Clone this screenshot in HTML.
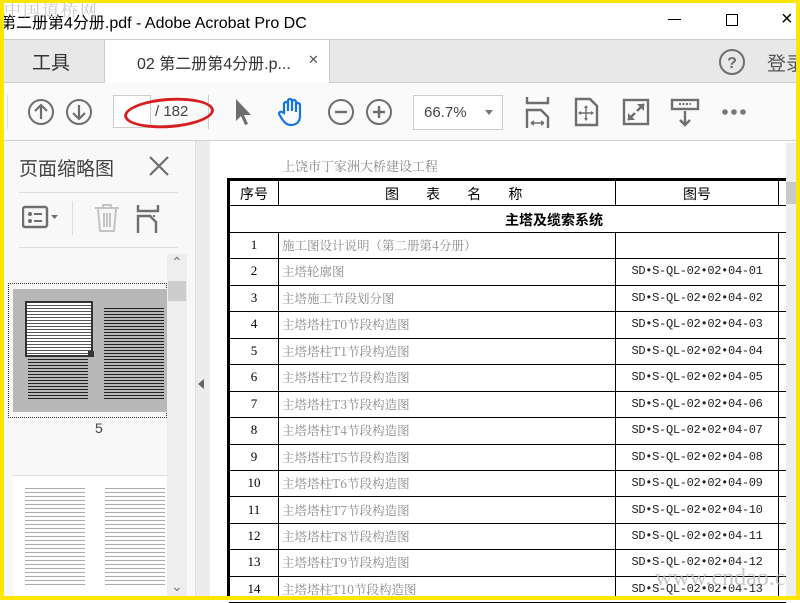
<!DOCTYPE html>
<html><head><meta charset="utf-8"><style>
*{margin:0;padding:0;box-sizing:border-box}
body{width:800px;height:600px;position:relative;overflow:hidden;background:#fff;font-family:"Liberation Sans","Noto Sans CJK SC",sans-serif}
.a{position:absolute}
.ic{position:absolute}
.tx{position:absolute;white-space:nowrap}
.h{position:absolute;height:1px;background:#000}
.v{position:absolute;width:1px;background:#000}
.num{position:absolute;width:50px;text-align:center;font-size:13px;color:#000;font-family:"Liberation Serif",serif}
.nm{position:absolute;left:282px;font-size:12.5px;color:#8a8a8a;font-family:"Noto Serif CJK SC",serif}
.cd{position:absolute;left:616px;width:162px;text-align:center;font-size:12px;color:#222;font-family:"Liberation Mono",monospace;letter-spacing:-0.3px}
</style></head><body>
<!-- title bar -->
<div class="tx" style="left:0;top:9px;font-size:16px;color:#000">第二册第4分册.pdf - Adobe Acrobat Pro DC</div>
<div class="tx" style="left:4px;top:-4px;font-size:17px;color:#c8c8c8;font-family:'Noto Serif CJK SC',serif;letter-spacing:2px">中国道桥网</div>
<div class="a" style="left:668px;top:19px;width:13px;height:1px;background:#000"></div>
<div class="a" style="left:726px;top:14px;width:12px;height:12px;border:1px solid #000"></div>
<div class="tx" style="left:781px;top:8px;font-size:20px;color:#000">×</div>
<!-- tab bar -->
<div class="a" style="left:0;top:39px;width:800px;height:44px;background:#e8e8e8;border-top:1px solid #ccc;border-bottom:1px solid #ccc"></div>
<div class="tx" style="left:32px;top:48px;font-size:19px;color:#333">工具</div>
<div class="a" style="left:104px;top:40px;width:226px;height:44px;background:#fff;border-left:1px solid #ccc;border-right:1px solid #ccc"></div>
<div class="tx" style="left:137px;top:50px;font-size:16px;color:#333">02 第二册第4分册.p...</div>
<div class="tx" style="left:308px;top:52px;font-size:13px;color:#555">✕</div>
<svg class="ic" style="left:718px;top:48px" width="28" height="28"><circle cx="14" cy="14" r="12" fill="none" stroke="#6e6e6e" stroke-width="2"/><text x="14" y="20" text-anchor="middle" font-size="16" font-weight="bold" fill="#6e6e6e" font-family="Liberation Sans">?</text></svg>
<div class="tx" style="left:767px;top:49px;font-size:19px;color:#555">登录</div>
<!-- toolbar -->
<div class="a" style="left:0;top:83px;width:800px;height:58px;background:#fafafa;border-bottom:1px solid #d0d0d0"></div>
<div class="a" style="left:7px;top:95px;width:1px;height:34px;background:#ddd"></div>
<svg class="ic" style="left:27px;top:98px" width="28" height="28"><circle cx="14" cy="14" r="12" fill="none" stroke="#6e6e6e" stroke-width="2"/><path d="M14 21V8M8 13l6-6 6 6" fill="none" stroke="#6e6e6e" stroke-width="2.2"/></svg>
<svg class="ic" style="left:65px;top:98px" width="28" height="28"><circle cx="14" cy="14" r="12" fill="none" stroke="#6e6e6e" stroke-width="2"/><path d="M14 7v13M8 15l6 6 6-6" fill="none" stroke="#6e6e6e" stroke-width="2.2"/></svg>
<div class="a" style="left:113px;top:95px;width:38px;height:33px;background:#fff;border:1px solid #ccc"></div>
<div class="tx" style="left:155px;top:103px;font-size:15px;color:#444">/ 182</div>
<div class="a" style="left:208px;top:95px;width:1px;height:34px;background:#ccc"></div>
<div class="a" style="left:124px;top:98px;width:90px;height:30px;border:3px solid #d62020;border-radius:50%;transform:rotate(-4deg)"></div>
<svg class="ic" style="left:232px;top:97px" width="22" height="30"><path d="M4 2v22l5-5 4 9 3-1-4-9h7z" fill="#6e6e6e"/></svg>
<svg class="ic" style="left:277px;top:96px" width="30" height="32"><path d="M7 17V8a2 2 0 014 0v7V5a2 2 0 014 0v10V6a2 2 0 014 0v10V9a2 2 0 014 0v11c0 6-4 9-9 9-4 0-6-2-9-6l-3-5a2 2 0 013-2z" fill="none" stroke="#1473e6" stroke-width="2.2"/></svg>
<svg class="ic" style="left:327px;top:98px" width="28" height="28"><circle cx="14" cy="14" r="12" fill="none" stroke="#6e6e6e" stroke-width="2"/><path d="M8 14h12" stroke="#6e6e6e" stroke-width="2.4"/></svg>
<svg class="ic" style="left:365px;top:98px" width="28" height="28"><circle cx="14" cy="14" r="12" fill="none" stroke="#6e6e6e" stroke-width="2"/><path d="M8 14h12M14 8v12" stroke="#6e6e6e" stroke-width="2.4"/></svg>
<div class="a" style="left:413px;top:95px;width:90px;height:35px;background:#fff;border:1px solid #ccc"></div>
<div class="tx" style="left:424px;top:104px;font-size:15px;color:#444">66.7%</div>
<div class="a" style="left:485px;top:110px;border-left:4px solid transparent;border-right:4px solid transparent;border-top:5px solid #777"></div>
<svg class="ic" style="left:524px;top:96px" width="28" height="32"><path d="M3 1v6h21V1M3 32V14h14l7 7v11" fill="none" stroke="#6e6e6e" stroke-width="2.4"/><path d="M7 27h13M7 27l3-2M7 27l3 2M20 27l-3-2M20 27l-3 2" stroke="#6e6e6e" stroke-width="1.4"/></svg>
<svg class="ic" style="left:574px;top:97px" width="26" height="30"><path d="M2 2h14l7 7v19H2z" fill="none" stroke="#6e6e6e" stroke-width="2.4"/><path d="M12 9v14M5 16h14" stroke="#6e6e6e" stroke-width="1.4"/><path d="M12 8l-2 3h4zM12 24l-2-3h4zM4 16l3-2v4zM20 16l-3-2v4z" fill="#6e6e6e"/></svg>
<svg class="ic" style="left:622px;top:98px" width="28" height="28"><rect x="2" y="2" width="24" height="24" fill="none" stroke="#6e6e6e" stroke-width="2.4"/><path d="M6 22l7-7M15 13l7-7" stroke="#6e6e6e" stroke-width="2.4"/><path d="M6 15v7h7zM15 6h7v7z" fill="#6e6e6e"/></svg>
<svg class="ic" style="left:670px;top:98px" width="30" height="30"><rect x="2" y="2" width="26" height="9" fill="none" stroke="#6e6e6e" stroke-width="2.4"/><path d="M9 6h12" stroke="#6e6e6e" stroke-width="2" stroke-dasharray="2 1.5"/><path d="M15 13v14M10 22l5 5 5-5" fill="none" stroke="#6e6e6e" stroke-width="2.4"/></svg>
<svg class="ic" style="left:720px;top:106px" width="28" height="12"><circle cx="5" cy="6" r="2.8" fill="#777"/><circle cx="14" cy="6" r="2.8" fill="#777"/><circle cx="23" cy="6" r="2.8" fill="#777"/></svg>
<!-- left panel -->
<div class="a" style="left:0;top:141px;width:195px;height:459px;background:#f8f8f8"></div>
<div class="tx" style="left:19px;top:154px;font-size:19px;color:#444">页面缩略图</div>
<svg class="ic" style="left:148px;top:155px" width="22" height="22"><path d="M2 2l18 18M20 2L2 20" stroke="#6e6e6e" stroke-width="2.2"/></svg>
<div class="a" style="left:19px;top:192px;width:159px;height:1px;background:#ddd"></div>
<svg class="ic" style="left:22px;top:205px" width="38" height="26"><rect x="1" y="2" width="24" height="20" rx="2" fill="none" stroke="#6e6e6e" stroke-width="2.4"/><circle cx="8" cy="9" r="2" fill="#6e6e6e"/><circle cx="8" cy="16" r="2" fill="#6e6e6e"/><path d="M12 9h8M12 16h8" stroke="#6e6e6e" stroke-width="2"/><path d="M29 10h7l-3.5 4z" fill="#6e6e6e"/></svg>
<div class="a" style="left:72px;top:201px;width:1px;height:34px;background:#ddd"></div>
<svg class="ic" style="left:93px;top:203px" width="28" height="30"><path d="M2 5h24M10 5V2h8v3M5 6l2 22h14l2-22M11 10v14M14 10v14M17 10v14" fill="none" stroke="#c4c4c4" stroke-width="2"/></svg>
<svg class="ic" style="left:136px;top:203px" width="26" height="30"><path d="M2 2v6h20V2M2 30V13h12l6 6v11" fill="none" stroke="#6e6e6e" stroke-width="2.4"/><path d="M3 13h16" stroke="#6e6e6e" stroke-width="2" stroke-dasharray="2 1.5"/></svg>
<div class="a" style="left:19px;top:247px;width:159px;height:1px;background:#ddd"></div>
<div class="a" style="left:167px;top:254px;width:20px;height:346px;background:#eee"></div>
<div class="tx" style="left:171px;top:254px;font-size:14px;color:#777">⌃</div>
<div class="a" style="left:168px;top:281px;width:18px;height:20px;background:#cdcdcd"></div>
<div class="tx" style="left:171px;top:578px;font-size:14px;color:#777">⌄</div>
<div class="a" style="left:8px;top:283px;width:159px;height:135px;border:1px dotted #333"></div>
<div class="a" style="left:13px;top:289px;width:154px;height:123px;background:#b8b8b8"></div>
<div class="a" style="left:28px;top:306px;width:60px;height:95px;background:repeating-linear-gradient(#b8b8b8 0 2px,#222 2px 3px)"></div>
<div class="a" style="left:104px;top:306px;width:60px;height:95px;background:repeating-linear-gradient(#b8b8b8 0 2px,#222 2px 3px)"></div>
<div class="a" style="left:25px;top:301px;width:68px;height:56px;border:2px solid #333;background:repeating-linear-gradient(#fff 0 2px,#555 2px 3px)"></div>
<div class="a" style="left:88px;top:351px;width:6px;height:6px;background:#333"></div>
<div class="tx" style="left:95px;top:420px;font-size:14px;color:#444">5</div>
<div class="a" style="left:13px;top:475px;width:154px;height:125px;background:#fff;border-top:1px solid #ddd"></div>
<div class="a" style="left:25px;top:485px;width:60px;height:100px;background:repeating-linear-gradient(#fff 0 3px,#aaa 3px 4px)"></div>
<div class="a" style="left:105px;top:485px;width:60px;height:100px;background:repeating-linear-gradient(#fff 0 3px,#aaa 3px 4px)"></div>
<!-- splitter -->
<div class="a" style="left:195px;top:141px;width:15px;height:459px;background:#ececec;border-left:1px solid #ddd"></div>
<div class="a" style="left:198px;top:379px;border-top:5px solid transparent;border-bottom:5px solid transparent;border-right:6px solid #666"></div>
<!-- page -->
<div class="a" style="left:210px;top:143px;width:576px;height:457px;background:#fff"></div>
<div class="tx" style="left:282px;top:156px;font-size:13px;color:#888;font-family:'Noto Serif CJK SC',serif">上饶市丁家洲大桥建设工程</div>
<div class="a" style="left:227px;top:178px;width:559px;height:3px;background:#000"></div>
<div class="a" style="left:227px;top:178px;width:3px;height:422px;background:#000"></div>
<div class="v" style="left:278px;top:180px;height:25px"></div>
<div class="v" style="left:615px;top:180px;height:25px"></div>
<div class="v" style="left:778px;top:180px;height:25px"></div>
<div class="h" style="left:229px;top:205px;width:557px"></div>
<div class="h" style="left:229px;top:232px;width:557px"></div>
<div class="v" style="left:278px;top:232px;height:368px"></div>
<div class="v" style="left:615px;top:232px;height:368px"></div>
<div class="v" style="left:778px;top:232px;height:368px"></div>
<div class="tx" style="left:240px;top:184px;font-size:14px;color:#000;font-family:'Noto Sans CJK SC',sans-serif">序号</div>
<div class="tx" style="left:385px;top:184px;font-size:14px;color:#000;font-family:'Noto Sans CJK SC',sans-serif;word-spacing:24px">图 表 名 称</div>
<div class="tx" style="left:683px;top:184px;font-size:14px;color:#000;font-family:'Noto Sans CJK SC',sans-serif">图号</div>
<div class="tx" style="left:505px;top:210px;font-size:14px;color:#000;font-weight:bold;font-family:'Noto Sans CJK SC',sans-serif">主塔及缆索系统</div>
<div id="rows"></div>
<script>
var names=["施工图设计说明（第二册第4分册）","主塔轮廓图","主塔施工节段划分图"];
for(var i=0;i<11;i++)names.push("主塔塔柱T"+i+"节段构造图");
var h="";
for(var i=0;i<14;i++){var t=232+i*26.45;
h+='<div class="h" style="left:229px;top:'+Math.round(t+26.45)+'px;width:557px"></div>';
h+='<div class="num" style="left:229px;top:'+Math.round(t+5)+'px">'+(i+1)+'</div>';
h+='<div class="nm" style="top:'+Math.round(t+4)+'px">'+names[i]+'</div>';
if(i>0)h+='<div class="cd" style="top:'+Math.round(t+6)+'px">SD•S-QL-02•02•04-'+(i<10?'0':'')+i+'</div>';}
document.getElementById('rows').innerHTML=h;
</script>
<div class="tx" style="left:655px;top:565px;font-size:24px;color:#bbb;font-family:'Liberation Serif',serif;opacity:.8">www.cndao.com</div>
<!-- right scrollbar -->
<div class="a" style="left:786px;top:143px;width:10px;height:457px;background:#eee"></div>
<div class="a" style="left:786px;top:182px;width:10px;height:22px;background:#c8c8c8"></div>
<!-- yellow frame -->
<div class="a" style="left:0;top:0;width:800px;height:3px;background:#ffe600"></div>
<div class="a" style="left:0;top:0;width:4px;height:600px;background:#ffe600"></div>
<div class="a" style="left:796px;top:0;width:4px;height:600px;background:#ffe600"></div>
<div class="a" style="left:0;top:596px;width:800px;height:4px;background:#ffe600"></div>
</body></html>
